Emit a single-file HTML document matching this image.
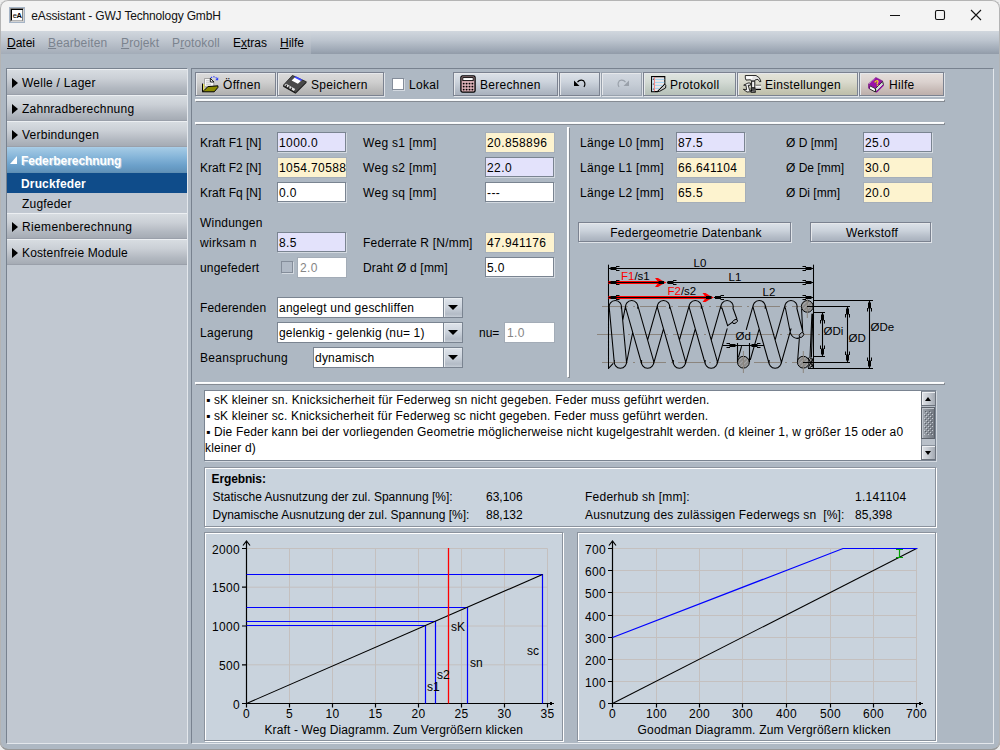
<!DOCTYPE html>
<html lang="de"><head><meta charset="utf-8"><title>eAssistant - GWJ Technology GmbH</title>
<style>
*{box-sizing:border-box;margin:0;padding:0}
html,body{width:1000px;height:750px;overflow:hidden;background:#ececec}
body{font-family:"Liberation Sans",sans-serif;font-size:12px;color:#000;position:relative}
.a{position:absolute;white-space:nowrap}
#win{left:0;top:0;width:1000px;height:750px;background:#aeb8c3;border-radius:8px;overflow:hidden;box-shadow:inset 0 -1px 0 0 #999,inset 0 0 0 1px #b0b0b0}
#title{left:0;top:0;width:1000px;height:31px;background:#f3f3f3}
#ttext{left:31.300px;top:9px;font-size:12px;line-height:15px;color:#111;letter-spacing:-.16px}
#menu{left:0;top:31px;width:1000px;height:23px;background:linear-gradient(#d1d7de 0%,#bdc5cf 40%,#9da7b4 85%,#919ba8 100%)}
#menu2{left:1px;top:31px;width:310px;height:23px;background:linear-gradient(#d1d7de 0%,#c0c7d0 40%,#abb3be 85%,#a3acb8 100%)}
.mi{top:36px;line-height:14px;font-size:12px}
.dis{color:#7b838e;letter-spacing:.12px}
u{text-decoration:underline;text-underline-offset:1px}
/* sidebar */
#side{left:6px;top:68px;width:182px;height:676px;background:#c1c8d1;border-left:1px solid #78828f;border-top:1px solid #78828f;border-right:1px solid #e3e7ec;border-bottom:1px solid #e3e7ec}
.si{left:7px;width:180px;height:26px;background:linear-gradient(#d7dce1 0%,#cbd0d6 35%,#b2b8c0 75%,#a5abb4 100%);border-top:1px solid #eceff2;border-bottom:1px solid #9aa0aa;line-height:26px;padding-left:15px;font-size:12px;letter-spacing:.25px}
.si:before{content:"";position:absolute;left:5px;top:8px;border-left:6px solid #000;border-top:5px solid transparent;border-bottom:5px solid transparent}
.si.sel{background:linear-gradient(#a4cae5 0%,#84b4d8 40%,#6a9fc9 75%,#6192b9 100%);border-top-color:#a8cde7;border-bottom-color:#5f8fb4;color:#fff;font-weight:bold;text-shadow:1px 1px 0 rgba(255,255,255,.4);letter-spacing:-.07px;padding-left:14px}
.si.sel:before{left:3px;top:8px;border:0;border-bottom:8px solid #fff;border-left:7px solid transparent}
.sub{left:7px;width:180px;height:20px;line-height:22px;padding-left:15px;font-size:12px;letter-spacing:.2px}
.sub.sel{background:#0f4c8a;color:#fff;font-weight:bold;letter-spacing:.15px;padding-left:14px}
/* main */
#main{left:191px;top:68px;width:803px;height:676px;border-left:1px solid #78828f;border-top:1px solid #78828f;border-right:1px solid #e3e7ec;border-bottom:1px solid #e3e7ec}
.btn{height:24px;top:72px;border:1px solid #7b8290;box-shadow:inset 1px 1px 0 #e6e8eb,1px 1px 0 #dfe3e8;background:linear-gradient(#dde2e9 0%,#ccd3dc 40%,#b3bbc6 80%,#a9b1bd 100%);line-height:24px;font-size:12px;letter-spacing:.3px}
.btn.g{background:linear-gradient(#dcdcdc 0%,#cfcfcf 40%,#b9b9b9 80%,#b0b0b0 100%)}
.btn.dd{border-color:#98a1ad;background:linear-gradient(#d3d9e1 0%,#c6cdd6 50%,#b4bcc7 100%)}
.btn svg{position:absolute}
.sep{height:3px;border-top:1px solid #fff;border-left:1px solid #fff;border-bottom:1px solid #858b93;border-right:1px solid #858b93;background:#f6f8fa}
.vsep{width:3px;border-left:1px solid #fff;border-top:1px solid #fff;border-right:1px solid #858b93;border-bottom:1px solid #858b93;background:#f6f8fa}
.lbl{font-size:12px;line-height:14px;letter-spacing:0}
.in{height:20px;width:69px;border:1px solid #7a8491;box-shadow:1px 1px 0 #d3d9e0;background:#fff;line-height:20px;padding-left:1px;font-size:12px;letter-spacing:.4px;overflow:hidden}
.in.v{background:#e3e2fb}
.in.y{background:#fdf3cf;box-shadow:none;border-color:#a5aeb9;width:70px;height:21px}
.in.d{color:#858585;border-color:#a3acb7;box-shadow:none;height:21px;padding-left:2px}
.cb{width:12px;height:12px;background:#fff;border:1px solid #848d9a;box-shadow:1px 1px 0 #d3d9e0}
.combo{height:21px;border:1px solid #7a8491;background:#fff;line-height:20px;padding-left:1px;font-size:12px;letter-spacing:.22px}
.combo i{position:absolute;right:0;top:0;width:19px;height:19px;border-left:1px solid #7a8491;background:linear-gradient(#dfe4eb 0%,#cdd4dd 45%,#b3bbc6 85%,#c6cdd6 100%);box-shadow:inset 1px 1px 0 #e8ecf0}
.combo i:after{content:"";position:absolute;left:4px;top:7px;border-top:5.500px solid #000;border-left:5px solid transparent;border-right:5px solid transparent}
.etch{border:1px solid #8a929d;box-shadow:inset 1px 1px 0 #fff,1px 1px 0 #fff;background:#c9d3dd}
.ta{font-size:12px;line-height:16px;letter-spacing:.16px}
.sbb{width:15px;height:15px;border:1px solid #6d747e;border-top-color:#8b939e;background:linear-gradient(90deg,#dfe2e7,#c5cad1 50%,#a4aab3);box-shadow:inset 1px 1px 0 #eef0f3}
.sbb b{position:absolute;left:3px;top:5px;border-left:3.500px solid transparent;border-right:3.500px solid transparent}
.l3{letter-spacing:.3px}
.l2{letter-spacing:.2px}
</style></head><body>
<div id="win" class="a">
<div id="title" class="a"></div>
<svg class="a" style="left:9px;top:7px" width="16" height="16" viewBox="0 0 16 16"><rect x=".5" y=".5" width="15" height="15" fill="#d2d2d2" stroke="#a5b4c6"/><path d="M1.500 14.500V1.500H14.500" stroke="#7a7a7a" fill="none"/><rect x="2" y="2" width="12" height="11.500" fill="#000"/><rect x="3" y="3" width="10.500" height="10.500" fill="#fff"/><text x="3.800" y="11.300" font-family="Liberation Sans,sans-serif" font-size="7.500" fill="#000">e</text><text x="7.600" y="11.300" font-family="Liberation Sans,sans-serif" font-size="7.500" font-weight="bold" fill="#000">A</text></svg>
<div id="ttext" class="a">eAssistant - GWJ Technology GmbH</div>
<svg class="a" style="left:880px;top:5px" width="110" height="22" viewBox="0 0 110 22" fill="none" stroke="#111" stroke-width="1.1"><path d="M10 10.5h10"/><rect x="55.5" y="5.5" width="9" height="9" rx="1.5"/><path d="M91 5l10 10M101 5l-10 10"/></svg>
<div id="menu" class="a"></div><div id="menu2" class="a"></div>
<div class="a mi" style="left:7px"><u>D</u>atei</div>
<div class="a mi dis" style="left:48px"><u>B</u>earbeiten</div>
<div class="a mi dis" style="left:121px"><u>P</u>rojekt</div>
<div class="a mi dis" style="left:172px">P<u>r</u>otokoll</div>
<div class="a mi" style="left:233px">E<u>x</u>tras</div>
<div class="a mi" style="left:280px"><u>H</u>ilfe</div>
<div id="side" class="a"></div>
<div class="a si" style="top:69px">Welle / Lager</div>
<div class="a si" style="top:95px">Zahnradberechnung</div>
<div class="a si" style="top:121px">Verbindungen</div>
<div class="a si sel" style="top:147px">Federberechnung</div>
<div class="a sub sel" style="top:173px">Druckfeder</div>
<div class="a sub" style="top:193px">Zugfeder</div>
<div class="a si" style="top:213px;letter-spacing:.35px">Riemenberechnung</div>
<div class="a si" style="top:239px;letter-spacing:.14px">Kostenfreie Module</div>
<div id="main" class="a"></div>
<div class="a btn g" style="left:195px;width:81px;padding-left:27px"><svg style="left:6px;top:3px" width="17" height="17" viewBox="0 0 17 17"><path d="M2.500 2.500h6l3.300 3.300v5H2.500z" fill="#f6f6f6" stroke="#8a8a8a" stroke-width=".7"/><path d="M8.300 2.300l3.600 3.700h-3.600z" fill="#fff" stroke="#000" stroke-width=".9"/><path d="M4 4.800h4M4 6.800h4.500M4 8.800h5" stroke="#b5b5b5" stroke-width=".8"/><path d="M.5 7.500v8.300" stroke="#000" stroke-width="1"/><path d="M1 8h1.400v6l-1.400 1.500z" fill="#e6de5a"/><path d="M2.400 14.200L5.900 10.600l10-.8v1.700L12.200 15.800H.6z" fill="#8b8a00" stroke="#000" stroke-width="1" stroke-linejoin="round"/><path d="M9 2c1-1.600 4.300-2 6 .8" fill="none" stroke="#2a3cff" stroke-width="1.100" stroke-dasharray="1.500 1"/><path d="M13.200 4.200l3-3v3z" fill="#2a3cff"/></svg>Öffnen</div>
<div class="a btn g" style="left:277px;width:107px;padding-left:33px"><svg style="left:5px;top:2px" width="25" height="19" viewBox="0 0 25 19"><path d="M9.400.4L23.400 6.800 12.600 17.600.2 10.400z" fill="#4a4a4a" stroke="#1a1a1a" stroke-width=".8" stroke-linejoin="round"/><path d="M.2 10.400v1.300l12.400 7.100v-1.200z" fill="#111"/><path d="M12.600 17.600l10.800-10.800v1.300L12.600 18.800z" fill="#222"/><path d="M8.600 5.600L12 2.300l6.400 3.200-3.500 3.300z" fill="#fff"/><path d="M11.300 2.400l1.400-1.200 6.400 3.200-1 1.700z" fill="#3a44ff"/><path d="M1.200 10.300l2-1.600 9 5.200-1.300 2.200z" fill="#e6e6e6"/><path d="M3.600 9.700l-.8 2.600M6.200 11.200l-1 2.700M8.600 12.600l-1 2.800" stroke="#222" stroke-width="1.200"/></svg>Speichern</div>
<div class="a cb" style="left:392px;top:78px"></div>
<div class="a lbl" style="left:409px;top:78px;letter-spacing:.3px">Lokal</div>
<div class="a btn" style="left:453px;width:105px;padding-left:26px"><svg style="left:6px;top:2px" width="16" height="18" viewBox="0 0 16 18"><rect x=".9" y=".9" width="14.200" height="16.200" rx="1.600" fill="#d9afb5" stroke="#000" stroke-width="1.300"/><rect x="2.800" y="2.600" width="10.400" height="3" fill="#fff" stroke="#000" stroke-width=".9"/><g fill="#000"><circle cx="3.700" cy="8.600" r=".95"/><circle cx="6.600" cy="8.600" r=".95"/><circle cx="9.500" cy="8.600" r=".95"/><circle cx="12.400" cy="8.600" r=".95"/><circle cx="3.700" cy="11.600" r=".95"/><circle cx="6.600" cy="11.600" r=".95"/><circle cx="9.500" cy="11.600" r=".95"/><circle cx="12.400" cy="11.600" r=".95"/><circle cx="3.700" cy="14.600" r=".95"/><circle cx="6.600" cy="14.600" r=".95"/><circle cx="9.500" cy="14.600" r=".95"/><circle cx="12.400" cy="14.600" r=".95"/></g></svg>Berechnen</div>
<div class="a btn" style="left:559px;width:41px"><svg style="left:13px;top:6px" width="14" height="10" viewBox="0 0 14 10" fill="none" stroke="#000" stroke-width="1.200"><path d="M4.500 3.200C6.500.3 10.800.5 11.800 3.800c.5 2-.2 3.200-.8 4.200"/><path d="M1 1.500V7h5.500z" fill="#000" stroke="none"/></svg></div>
<div class="a btn dd" style="left:601px;width:41px"><svg style="left:14px;top:6px" width="14" height="10" viewBox="0 0 14 10" fill="none" stroke="#9aa1aa" stroke-width="1.200"><path d="M9.500 3.200C7.500.3 3.200.5 2.200 3.800c-.5 2 .2 3.200.8 4.200"/><path d="M13 1.500V7H7.500z" fill="#9aa1aa" stroke="none"/></svg></div>
<div class="a btn" style="left:643px;width:93px;padding-left:26px;background:linear-gradient(#e0e5e1 0%,#d3dad4 40%,#bec8c0 80%,#b6c0b8 100%)"><svg style="left:7px;top:3px" width="16" height="17" viewBox="0 0 16 17"><path d="M.6.600h13.200v7.600L6.400 15.600H.6z" fill="#ece6e6" stroke="#000" stroke-width="1.100"/><path d="M1.200 1.200h1.600v14H1.200z" fill="#c4e2f5"/><path d="M4 3.400h9.300M4 6.400h9.300M4 9.400h7.500M4 12.400h4.500" stroke="#9fd0f0" stroke-width="1"/><path d="M3.500 1v14.300" stroke="#f08080" stroke-width=".9"/><circle cx="2.300" cy="3.200" r=".6" fill="#222"/><circle cx="2.300" cy="8" r=".6" fill="#222"/><circle cx="2.300" cy="13" r=".6" fill="#222"/><path d="M13.800 8.200l1 1.200-.2 2.600-6 3.300-2.200.3z" fill="#c4c4c4" stroke="#000" stroke-width=".9" stroke-linejoin="round"/></svg>Protokoll</div>
<div class="a btn" style="left:737px;width:121px;padding-left:27px;background:linear-gradient(#e4e4da 0%,#dadacd 40%,#c6c6b3 80%,#bebeaa 100%)"><svg style="left:5px;top:2px" width="19" height="19" viewBox="0 0 19 19"><path d="M2.300.5h10.700l3.300 2.300 1.700 3.600-1.300.4-1.700-2.400-2.700.4-.8 1.300h-3l-1-1.300-4.500.3-.7-2z" fill="#e4e4e4" stroke="#000" stroke-width=".8" stroke-linejoin="round"/><path d="M3 1.200h7l-1 2.500H3.300z" fill="#fff"/><path d="M8.600 6.200h3.200v6.600H8.600z" fill="#f2f2f2" stroke="#000" stroke-width=".9"/><path d="M7.700 12.700h5v5h-5z" fill="#000"/><g fill="#fff"><rect x="8.700" y="13.500" width=".9" height=".9"/><rect x="10.500" y="13.500" width=".9" height=".9"/><rect x="9.600" y="14.700" width=".9" height=".9"/><rect x="11.400" y="14.700" width=".9" height=".9"/><rect x="8.700" y="15.900" width=".9" height=".9"/><rect x="10.500" y="15.900" width=".9" height=".9"/></g><path d="M.7 10.200L5 8h2.400v2.300H5.200l1.500 5.400h1l0 1L4 17 .3 14.300l3.300.4L3 10.300z" fill="#f4f4f4" stroke="#000" stroke-width=".8" stroke-linejoin="round"/><path d="M12.700 10.300H18v4H12.700z" fill="#e0e0e0"/><path d="M12.700 10.300H18" stroke="#000" stroke-width=".7"/><path d="M12.700 14.400H18" stroke="#000" stroke-width="1.200"/><path d="M12.700 11.200H18" stroke="#fff" stroke-width="1"/></svg>Einstellungen</div>
<div class="a btn" style="left:859px;width:85px;padding-left:29px;background:linear-gradient(#e5dfdc 0%,#dbd2cf 40%,#c6b9b5 80%,#bdafab 100%)"><svg style="left:8px;top:4px" width="17" height="17" viewBox="0 0 17 17"><path d="M1.800 8.800L7.400 11.600v3.400L1.400 11.800z" fill="#fff" stroke="#000" stroke-width=".8"/><path d="M7.400 11.600L14.600 4.400l.8 3.200-7.200 7.400z" fill="#cfdcd4" stroke="#000" stroke-width=".8"/><path d="M8.200 15.400l7.400-7.400" stroke="#9a10a8" stroke-width="1.100"/><path d="M.2 7.200L7.800.4l6.800 3.600-7.200 7.200z" fill="#9a10a8" stroke="#5c0866" stroke-width=".5"/><path d="M.2 7.200v4l1.600.8V8.400z" fill="#7c0a88"/><path d="M1 6.800L7.400 1.200" stroke="#d9a6de" stroke-width=".9" stroke-dasharray="1 .8"/><text x="6.300" y="9" font-family="Liberation Sans,sans-serif" font-size="8" font-weight="bold" fill="#f4ea00" transform="rotate(-20 8.600 6)">?</text></svg>Hilfe</div>
<div class="a sep" style="left:195px;top:99px;width:750px"></div>
<div class="a sep" style="left:195px;top:122px;width:750px"></div>
<div class="a vsep" style="left:567px;top:127px;height:251px"></div>
<div class="a sep" style="left:195px;top:382px;width:750px"></div>
<div class="a lbl" style="left:200px;top:136px">Kraft F1 [N]</div>
<div class="a lbl" style="left:200px;top:161px">Kraft F2 [N]</div>
<div class="a lbl" style="left:200px;top:186px">Kraft Fq [N]</div>
<div class="a in v" style="left:277px;top:132px">1000.0</div>
<div class="a in y" style="left:277px;top:157px">1054.70588</div>
<div class="a in" style="left:277px;top:182px">0.0</div>
<div class="a lbl l3" style="left:363px;top:136px">Weg s1 [mm]</div>
<div class="a lbl l3" style="left:363px;top:161px">Weg s2 [mm]</div>
<div class="a lbl l3" style="left:363px;top:186px">Weg sq [mm]</div>
<div class="a in y" style="left:485px;top:132px">20.858896</div>
<div class="a in v" style="left:485px;top:157px">22.0</div>
<div class="a in" style="left:485px;top:182px">---</div>
<div class="a lbl" style="left:200px;top:216px;letter-spacing:0.2px">Windungen</div>
<div class="a lbl" style="left:200px;top:236px;letter-spacing:0.3px">wirksam n</div>
<div class="a lbl" style="left:200px;top:261px;letter-spacing:0.2px">ungefedert</div>
<div class="a in v" style="left:277px;top:232px">8.5</div>
<div class="a cb" style="left:281px;top:261px;background:#b1bac6"></div>
<div class="a in d" style="left:297px;top:257px;width:50px">2.0</div>
<div class="a lbl l2" style="left:363px;top:236px">Federrate R [N/mm]</div>
<div class="a lbl l2" style="left:363px;top:261px">Draht Ø d [mm]</div>
<div class="a in y" style="left:485px;top:232px">47.941176</div>
<div class="a in" style="left:485px;top:257px">5.0</div>
<div class="a lbl" style="left:200px;top:301px;letter-spacing:0.15px">Federenden</div>
<div class="a lbl" style="left:200px;top:326px;letter-spacing:0.33px">Lagerung</div>
<div class="a lbl" style="left:200px;top:351px;letter-spacing:0.3px">Beanspruchung</div>
<div class="a combo" style="left:277px;top:297px;width:186px">angelegt und geschliffen<i></i></div>
<div class="a combo" style="left:277px;top:322px;width:186px;letter-spacing:.14px">gelenkig - gelenkig (nu= 1)<i></i></div>
<div class="a combo" style="left:313px;top:347px;width:150px">dynamisch<i></i></div>
<div class="a lbl" style="left:479px;top:326px">nu=</div>
<div class="a in d" style="left:504px;top:322px;width:51px">1.0</div>
<div class="a lbl l3" style="left:580px;top:136px">Länge L0 [mm]</div>
<div class="a lbl l3" style="left:580px;top:161px">Länge L1 [mm]</div>
<div class="a lbl l3" style="left:580px;top:186px">Länge L2 [mm]</div>
<div class="a in v" style="left:676px;top:132px">87.5</div>
<div class="a in y" style="left:676px;top:157px">66.641104</div>
<div class="a in y" style="left:676px;top:182px">65.5</div>
<div class="a lbl" style="left:786px;top:136px">Ø D [mm]</div>
<div class="a lbl" style="left:786px;top:161px">Ø De [mm]</div>
<div class="a lbl" style="left:786px;top:186px">Ø Di [mm]</div>
<div class="a in v" style="left:863px;top:132px">25.0</div>
<div class="a in y" style="left:863px;top:157px">30.0</div>
<div class="a in y" style="left:863px;top:182px">20.0</div>
<div class="a btn" style="left:578px;top:222px;width:213px;height:20px;line-height:20px;text-align:center;padding-left:3px;letter-spacing:.22px">Federgeometrie Datenbank</div>
<div class="a btn" style="left:810px;top:222px;width:121px;height:20px;line-height:20px;text-align:center;padding-left:3px;letter-spacing:.2px">Werkstoff</div>
<svg class="a" style="left:590px;top:250px" width="320" height="130" viewBox="590 250 320 130"><defs><pattern id="hat" width="3" height="3" patternUnits="userSpaceOnUse" patternTransform="rotate(45)"><rect width="3" height="3" fill="#8a8a8a"/><rect width="1" height="3" fill="#a6a6a6"/></pattern></defs><path d="M602 306.5H801M597 334.500H822M602 362.500H797" stroke="#8b857e" stroke-width="1.1" stroke-dasharray="26 5 2 5" fill="none"/><path d="M609.2 307.1L614.3 362.9M621.4 305.9L626.5 361.7M625.7 305.3L622.7 320.3M632.7 332.3L626.4 363.5M625.8 308.2L641.7 364M637.6 304.8L653.5 360.6M657.6 304.8L647.6 340M663.5 328.8L653.5 364M657.6 308.2L673.5 364M669.4 304.8L685.3 360.6M689.4 304.8L679.4 340M695.3 328.8L685.3 364M689.4 308.2L705.3 364M701.2 304.8L717.1 360.6M721.2 304.8L711.2 340M727.1 328.8L717.1 364M609.4 308.2A6.1 6.1 0 1 1 621.2 308.2M625.8 308.2A6.1 6.1 0 1 1 637.6 308.2M657.6 308.2A6.1 6.1 0 1 1 669.4 308.2M689.4 308.2A6.1 6.1 0 1 1 701.2 308.2M721.2 308.2A6.1 6.1 0 1 1 733 308.2M614.5 360.6A6.1 6.1 0 1 0 626.3 360.6M641.7 360.6A6.1 6.1 0 1 0 653.5 360.6M673.5 360.6A6.1 6.1 0 1 0 685.3 360.6M705.3 360.6A6.1 6.1 0 1 0 717.1 360.6M608.5 265V368.5M608.5 368.4L613 363.6M722 308L727.6 325.7L733.2 321.6M732.9 308L736.9 319M741.5 346.5L738.5 357M753.3 304.8L746.3 329.5M759.2 328.8L750.4 359.5M753.3 308.2L769.2 364M765.1 304.8L781 360.6M785.1 304.8L775.1 340M791 328.8L781 364M753.3 308.2A6.1 6.1 0 1 1 765.1 308.2M769.2 360.6A6.1 6.1 0 1 0 781 360.6M785.1 308.2A6.1 6.1 0 1 1 796.9 308.2M785.4 308L790 331C791 338 797 339.500 800 337.500M796.8 308L802.9 332M797.6 361L799.3 339M801.6 309L802.6 330M811.9 314L810 357M812.9 314L811.4 357M813.5 265V368.5" stroke="#000" stroke-width="1.050" fill="none" stroke-linecap="round"/><ellipse cx="735" cy="321.500" rx="2.800" ry="1.700" transform="rotate(-35 735 321.500)" fill="#a3a8b0" stroke="#000" stroke-width=".9"/><ellipse cx="801.500" cy="335" rx="2.800" ry="1.800" transform="rotate(-50 801.500 335)" fill="#a3a8b0" stroke="#000" stroke-width=".9"/><circle cx="743.4" cy="362.2" r="5.900" fill="url(#hat)" stroke="#000" stroke-width="1"/><circle cx="807.3" cy="306.4" r="5.900" fill="url(#hat)" stroke="#000" stroke-width="1"/><circle cx="803.3" cy="362.2" r="5.900" fill="url(#hat)" stroke="#000" stroke-width="1"/><path d="M809.5 357.500A5.900 5.900 0 0 1 813.500 362.500 5.900 5.900 0 0 1 809.500 367.800" fill="url(#hat)" stroke="#000" stroke-width="1"/><path d="M808 357.500L813.500 368M813.500 357.500L808 368" stroke="#000" stroke-width="1" fill="none"/><path d="M743.400 351V373M807.300 297V318M803.300 351V373" stroke="#8b857e" stroke-width="1" fill="none"/><path d="M608.5 268.5H813.5M667 282.500H813.500M714 297.500H813.500M813.5 300.500H873M807 306.500H850M813.500 312.500H825M813.500 356.500H825M803 362.500H850M808 368.500H873M869.5 300.500V368.500M847.500 306.500V362.500M822.500 312.500V356.500M723 345.500H764M737.500 343V362M749.500 343V362" stroke="#000" stroke-width="1.1" fill="none"/><path d="M608.500 282.500H660M608.500 297.500H708" stroke="#ff0000" stroke-width="3.200" fill="none"/><path d="M655 278h3l4 2.500l4.500 2l-4.500 2l-4 2.500h-3l3.500-4.500zM702.500 293h3l4 2.500l4.500 2l-4.500 2l-4 2.500h-3l3.500-4.500z" fill="#ff0000"/><path d="M608.500 282.500H662M608.500 297.500H709" stroke="#000" stroke-width="1" fill="none"/><rect x="658.500" y="281" width="5.500" height="3" fill="#000"/><rect x="706" y="296" width="5.500" height="3" fill="#000"/><rect x="805.5" y="267.0" width="6" height="3" fill="#000"/><path d="M806.0 266.5h-3.5M806.0 270.5h-3.5" stroke="#000" stroke-width="1" fill="none"/><rect x="805.5" y="281.0" width="6" height="3" fill="#000"/><path d="M806.0 280.5h-3.5M806.0 284.5h-3.5" stroke="#000" stroke-width="1" fill="none"/><rect x="805.5" y="296.0" width="6" height="3" fill="#000"/><path d="M806.0 295.5h-3.5M806.0 299.5h-3.5" stroke="#000" stroke-width="1" fill="none"/><rect x="610.5" y="267.0" width="6" height="3" fill="#000"/><path d="M616.0 266.5h3.5M616.0 270.5h3.5" stroke="#000" stroke-width="1" fill="none"/><rect x="610.5" y="281.0" width="6" height="3" fill="#000"/><path d="M616.0 280.5h3.5M616.0 284.5h3.5" stroke="#000" stroke-width="1" fill="none"/><rect x="610.5" y="296.0" width="6" height="3" fill="#000"/><path d="M616.0 295.5h3.5M616.0 299.5h3.5" stroke="#000" stroke-width="1" fill="none"/><rect x="667.5" y="281.0" width="6" height="3" fill="#000"/><path d="M673.0 280.5h3.5M673.0 284.5h3.5" stroke="#000" stroke-width="1" fill="none"/><rect x="715" y="296.0" width="6" height="3" fill="#000"/><path d="M720.5 295.5h3.5M720.5 299.5h3.5" stroke="#000" stroke-width="1" fill="none"/><rect x="868.0" y="302.5" width="3" height="6" fill="#000"/><path d="M867.5 308.0v3.5M871.5 308.0v3.5" stroke="#000" stroke-width="1" fill="none"/><rect x="868.0" y="360.5" width="3" height="6" fill="#000"/><path d="M867.5 361.0v-3.5M871.5 361.0v-3.5" stroke="#000" stroke-width="1" fill="none"/><rect x="846.0" y="308.5" width="3" height="6" fill="#000"/><path d="M845.5 314.0v3.5M849.5 314.0v3.5" stroke="#000" stroke-width="1" fill="none"/><rect x="846.0" y="354.5" width="3" height="6" fill="#000"/><path d="M845.5 355.0v-3.5M849.5 355.0v-3.5" stroke="#000" stroke-width="1" fill="none"/><rect x="821.0" y="314.5" width="3" height="6" fill="#000"/><path d="M820.5 320.0v3.5M824.5 320.0v3.5" stroke="#000" stroke-width="1" fill="none"/><rect x="821.0" y="348.5" width="3" height="6" fill="#000"/><path d="M820.5 349.0v-3.5M824.5 349.0v-3.5" stroke="#000" stroke-width="1" fill="none"/><rect x="729.5" y="344.0" width="6" height="3" fill="#000"/><path d="M730.0 343.5h-3.5M730.0 347.5h-3.5" stroke="#000" stroke-width="1" fill="none"/><rect x="751.5" y="344.0" width="6" height="3" fill="#000"/><path d="M757.0 343.5h3.5M757.0 347.5h3.5" stroke="#000" stroke-width="1" fill="none"/><text x="693.500" y="267" font-family="Liberation Sans,sans-serif" font-size="11.500">L0</text><text x="728.500" y="281" font-family="Liberation Sans,sans-serif" font-size="11.500">L1</text><text x="762.500" y="296" font-family="Liberation Sans,sans-serif" font-size="11.500">L2</text><text x="621" y="279.500" font-family="Liberation Sans,sans-serif" font-size="11.500"><tspan fill="#ff0000">F1</tspan>/s1</text><text x="667.500" y="294.500" font-family="Liberation Sans,sans-serif" font-size="11.500"><tspan fill="#ff0000">F2</tspan>/s2</text><text x="735.500" y="339.500" font-family="Liberation Sans,sans-serif" font-size="11.500">Ød</text><text x="823.500" y="334.500" font-family="Liberation Sans,sans-serif" font-size="11.500">ØDi</text><text x="848.500" y="341.500" font-family="Liberation Sans,sans-serif" font-size="11.500">ØD</text><text x="870.500" y="330.500" font-family="Liberation Sans,sans-serif" font-size="11.500">ØDe</text></svg>
<div class="a" style="left:204px;top:390px;width:732px;height:71px;background:#fff;border:1px solid #7a8491;box-shadow:1px 1px 0 #d3d9e0"></div>
<div class="a ta" style="left:206px;top:392px">▪ sK kleiner sn. Knicksicherheit für Federweg sn nicht gegeben. Feder muss geführt werden.</div>
<div class="a ta" style="left:206px;top:408px">▪ sK kleiner sc. Knicksicherheit für Federweg sc nicht gegeben. Feder muss geführt werden.</div>
<div class="a ta" style="left:206px;top:424px">▪ Die Feder kann bei der vorliegenden Geometrie möglicherweise nicht kugelgestrahlt werden. (d kleiner 1, w größer 15 oder a0</div>
<div class="a ta" style="left:205px;top:440px">kleiner d)</div>
<div class="a" style="left:921px;top:391px;width:14px;height:69px;background:#b9c0c9;border-left:1px solid #8b939e"></div>
<div class="a sbb" style="left:921px;top:391px"><b style="border-bottom:4px solid #000;border-top:0"></b></div>
<div class="a" style="left:921px;top:407px;width:14px;height:32px;border:1px solid #5d636c;background:linear-gradient(90deg,#a3a9b1,#8d939b 40%,#747a83);box-shadow:inset 1px 1px 0 #c0c5cc"><svg width="12" height="30" style="position:absolute;left:0;top:0"><defs><pattern id="dots" width="4" height="4" patternUnits="userSpaceOnUse"><rect x="0" y="0" width="1" height="1" fill="#c9ced5"/><rect x="2" y="2" width="1" height="1" fill="#c9ced5"/><rect x="1" y="1" width="1" height="1" fill="#5a6069"/><rect x="3" y="3" width="1" height="1" fill="#5a6069"/></pattern></defs><rect x="2" y="3" width="9" height="24" fill="url(#dots)"/></svg></div>
<div class="a sbb" style="left:921px;top:445px"><b style="border-top:4px solid #000;border-bottom:0;top:5px"></b></div>
<div class="a etch" style="left:204px;top:467px;width:732px;height:60px"></div>
<div class="a lbl" style="left:211.500px;top:472px;font-weight:bold;letter-spacing:-.12px">Ergebnis:</div>
<div class="a lbl" style="left:212.5px;top:490px">Statische Ausnutzung der zul. Spannung [%]:</div>
<div class="a lbl" style="left:212.5px;top:508px">Dynamische Ausnutzung der zul. Spannung [%]:</div>
<div class="a lbl" style="left:486px;top:490px">63,106</div>
<div class="a lbl" style="left:486px;top:508px">88,132</div>
<div class="a lbl" style="left:585px;top:490px;letter-spacing:.25px">Federhub sh [mm]:</div>
<div class="a lbl" style="left:585px;top:508px;letter-spacing:.17px">Ausnutzung des zulässigen Federwegs sn&nbsp; [%]:</div>
<div class="a lbl" style="left:855px;top:490px;letter-spacing:.3px">1.141104</div>
<div class="a lbl" style="left:855px;top:508px;letter-spacing:.1px">85,398</div>
<div class="a etch" style="left:204px;top:532px;width:359px;height:209px"></div>
<svg class="a" style="left:204px;top:532px" width="359" height="209" viewBox="204 532 359 209"><path d="M289.5 548.5V703.5M332.5 548.5V703.5M375.5 548.5V703.5M418.5 548.5V703.5M461.5 548.5V703.5M504.5 548.5V703.5M547.5 548.5V703.5M246.5 664.8H547.5M246.5 626.0H547.5M246.5 587.2H547.5M246.5 548.5H547.5" stroke="#c4c0bf" stroke-width="1" fill="none"/><path d="M246.5 541V703.5H554.0M246.5 703.5v4M289.5 703.5v4M332.5 703.5v4M375.5 703.5v4M418.5 703.5v4M461.5 703.5v4M504.5 703.5v4M547.5 703.5v4M246.5 703.5h-4.5M246.5 664.8h-4.5M246.5 626.0h-4.5M246.5 587.2h-4.5M246.5 548.5h-4.5M243.0 545.5l3.5-4.5l3.5 4.5" stroke="#000" stroke-width="1.2" fill="none"/><rect x="550.0" y="702.0" width="2" height="3" fill="#000"/><path d="M246.5 625.5H425.5V703.5M246.5 621.5H435.5V703.5M246.5 607.5H467.5V703.5M246.5 574.5H542.5V703.5" stroke="#0000ff" stroke-width="1.2" fill="none"/><path d="M246.5 703.5L542.5 574.5" stroke="#000" stroke-width="1.1" fill="none"/><path d="M448.5 548V703.5" stroke="#ff0000" stroke-width="1.3" fill="none"/><text x="240" y="708.5" text-anchor="end" font-family="Liberation Sans,sans-serif" font-size="12" letter-spacing=".3">0</text><text x="240" y="669.8" text-anchor="end" font-family="Liberation Sans,sans-serif" font-size="12" letter-spacing=".3">500</text><text x="240" y="631.0" text-anchor="end" font-family="Liberation Sans,sans-serif" font-size="12" letter-spacing=".3">1000</text><text x="240" y="592.2" text-anchor="end" font-family="Liberation Sans,sans-serif" font-size="12" letter-spacing=".3">1500</text><text x="240" y="553.5" text-anchor="end" font-family="Liberation Sans,sans-serif" font-size="12" letter-spacing=".3">2000</text><text x="246.5" y="718" text-anchor="middle" font-family="Liberation Sans,sans-serif" font-size="12" letter-spacing=".3">0</text><text x="289.5" y="718" text-anchor="middle" font-family="Liberation Sans,sans-serif" font-size="12" letter-spacing=".3">5</text><text x="332.5" y="718" text-anchor="middle" font-family="Liberation Sans,sans-serif" font-size="12" letter-spacing=".3">10</text><text x="375.5" y="718" text-anchor="middle" font-family="Liberation Sans,sans-serif" font-size="12" letter-spacing=".3">15</text><text x="418.5" y="718" text-anchor="middle" font-family="Liberation Sans,sans-serif" font-size="12" letter-spacing=".3">20</text><text x="461.5" y="718" text-anchor="middle" font-family="Liberation Sans,sans-serif" font-size="12" letter-spacing=".3">25</text><text x="504.5" y="718" text-anchor="middle" font-family="Liberation Sans,sans-serif" font-size="12" letter-spacing=".3">30</text><text x="547.5" y="718" text-anchor="middle" font-family="Liberation Sans,sans-serif" font-size="12" letter-spacing=".3">35</text><text x="451" y="631" font-family="Liberation Sans,sans-serif" font-size="12">sK</text><text x="470" y="667" font-family="Liberation Sans,sans-serif" font-size="12">sn</text><text x="527" y="655" font-family="Liberation Sans,sans-serif" font-size="12">sc</text><text x="437" y="679" font-family="Liberation Sans,sans-serif" font-size="12">s2</text><text x="427" y="691" font-family="Liberation Sans,sans-serif" font-size="12">s1</text><text x="264.500" y="734" font-family="Liberation Sans,sans-serif" font-size="12" letter-spacing=".12">Kraft - Weg Diagramm. Zum Vergrößern klicken</text></svg>
<div class="a etch" style="left:577px;top:532px;width:359px;height:209px"></div>
<svg class="a" style="left:577px;top:532px" width="359" height="209" viewBox="577 532 359 209"><path d="M656.5 548.5V703.5M699.5 548.5V703.5M742.5 548.5V703.5M786.5 548.5V703.5M830.5 548.5V703.5M873.5 548.5V703.5M916.5 548.5V703.5M612.5 681.5H916.5M612.5 659.5H916.5M612.5 637.5H916.5M612.5 615.5H916.5M612.5 592.5H916.5M612.5 570.5H916.5M612.5 548.5H916.5" stroke="#c4c0bf" stroke-width="1" fill="none"/><path d="M612.5 541V703.5H923.0M612.5 703.5v4M656.5 703.5v4M699.5 703.5v4M742.5 703.5v4M786.5 703.5v4M830.5 703.5v4M873.5 703.5v4M916.5 703.5v4M612.5 703.5h-4.5M612.5 681.5h-4.5M612.5 659.5h-4.5M612.5 637.5h-4.5M612.5 615.5h-4.5M612.5 592.5h-4.5M612.5 570.5h-4.5M612.5 548.5h-4.5M609.0 545.5l3.5-4.5l3.5 4.5" stroke="#000" stroke-width="1.2" fill="none"/><rect x="919.0" y="702.0" width="2" height="3" fill="#000"/><path d="M612.5 703.5L916.5 548.5" stroke="#000" stroke-width="1.1" fill="none"/><path d="M612.5 637.5L843 548.5H917.5" stroke="#0000ff" stroke-width="1.2" fill="none"/><path d="M899.5 549.5V557.5M896 549.5h7M896 557.5h7" stroke="#00a000" stroke-width="1.2" fill="none"/><text x="606" y="708.5" text-anchor="end" font-family="Liberation Sans,sans-serif" font-size="12" letter-spacing=".3">0</text><text x="612.5" y="718" text-anchor="middle" font-family="Liberation Sans,sans-serif" font-size="12" letter-spacing=".3">0</text><text x="606" y="686.5" text-anchor="end" font-family="Liberation Sans,sans-serif" font-size="12" letter-spacing=".3">100</text><text x="656.5" y="718" text-anchor="middle" font-family="Liberation Sans,sans-serif" font-size="12" letter-spacing=".3">100</text><text x="606" y="664.5" text-anchor="end" font-family="Liberation Sans,sans-serif" font-size="12" letter-spacing=".3">200</text><text x="699.5" y="718" text-anchor="middle" font-family="Liberation Sans,sans-serif" font-size="12" letter-spacing=".3">200</text><text x="606" y="642.5" text-anchor="end" font-family="Liberation Sans,sans-serif" font-size="12" letter-spacing=".3">300</text><text x="742.5" y="718" text-anchor="middle" font-family="Liberation Sans,sans-serif" font-size="12" letter-spacing=".3">300</text><text x="606" y="620.5" text-anchor="end" font-family="Liberation Sans,sans-serif" font-size="12" letter-spacing=".3">400</text><text x="786.5" y="718" text-anchor="middle" font-family="Liberation Sans,sans-serif" font-size="12" letter-spacing=".3">400</text><text x="606" y="597.5" text-anchor="end" font-family="Liberation Sans,sans-serif" font-size="12" letter-spacing=".3">500</text><text x="830.5" y="718" text-anchor="middle" font-family="Liberation Sans,sans-serif" font-size="12" letter-spacing=".3">500</text><text x="606" y="575.5" text-anchor="end" font-family="Liberation Sans,sans-serif" font-size="12" letter-spacing=".3">600</text><text x="873.5" y="718" text-anchor="middle" font-family="Liberation Sans,sans-serif" font-size="12" letter-spacing=".3">600</text><text x="606" y="553.5" text-anchor="end" font-family="Liberation Sans,sans-serif" font-size="12" letter-spacing=".3">700</text><text x="916.5" y="718" text-anchor="middle" font-family="Liberation Sans,sans-serif" font-size="12" letter-spacing=".3">700</text><text x="637.500" y="734" font-family="Liberation Sans,sans-serif" font-size="12" letter-spacing=".2">Goodman Diagramm. Zum Vergrößern klicken</text></svg>
<div class="a" style="left:0;top:0;width:1000px;height:750px;border:1px solid #b4b4b4;border-bottom-color:#989898;border-radius:8px;pointer-events:none"></div>
</div>
</body></html>
